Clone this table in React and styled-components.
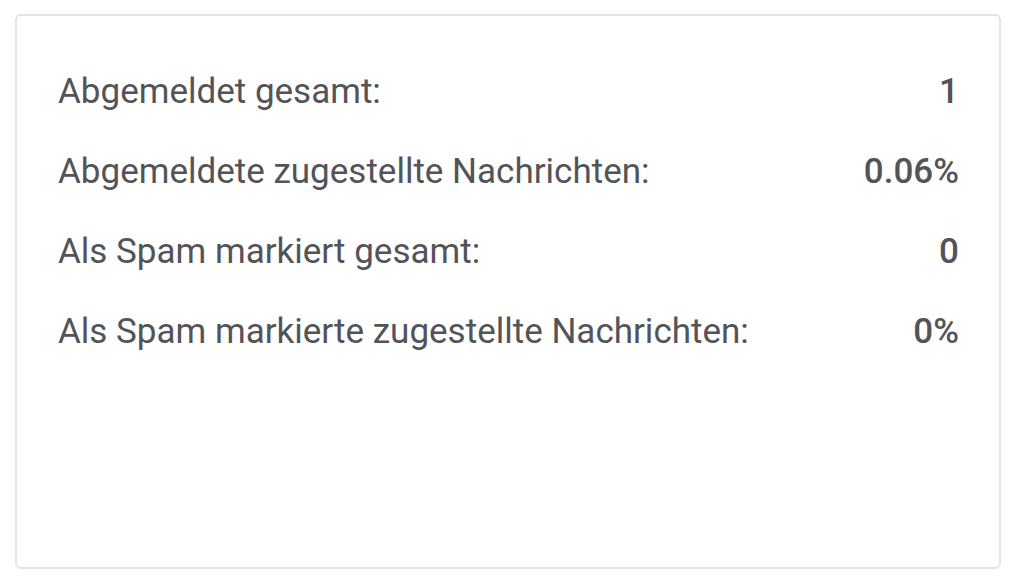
import React from "react";
import styled, { createGlobalStyle } from "styled-components";

const GlobalStyle = createGlobalStyle`
  body {
    margin: 0;
    background: #fff;
    font-family: Roboto, "Liberation Sans", sans-serif;
  }
`;

const Page = styled.div`
  padding: 14px 17px 18px 15px;
`;

const Card = styled.div`
  height: 555px;
  box-sizing: border-box;
  border: 2px solid #e4e4e4;
  border-radius: 6px;
  padding: 35px 40px 0 41px;
`;

const Row = styled.div`
  display: flex;
  justify-content: space-between;
  align-items: center;
  height: 80px;
  font-size: 35px;
  color: #535358;
`;

const Value = styled.span`
  font-weight: 500;
`;

const stats = [
  ["Abgemeldet gesamt:", "1"],
  ["Abgemeldete zugestellte Nachrichten:", "0.06%"],
  ["Als Spam markiert gesamt:", "0"],
  ["Als Spam markierte zugestellte Nachrichten:", "0%"],
];

export default function App() {
  return (
    <Page>
      <GlobalStyle />
      <Card>
        {stats.map(([label, value]) => (
          <Row key={label}>
            <span>{label}</span>
            <Value>{value}</Value>
          </Row>
        ))}
      </Card>
    </Page>
  );
}
